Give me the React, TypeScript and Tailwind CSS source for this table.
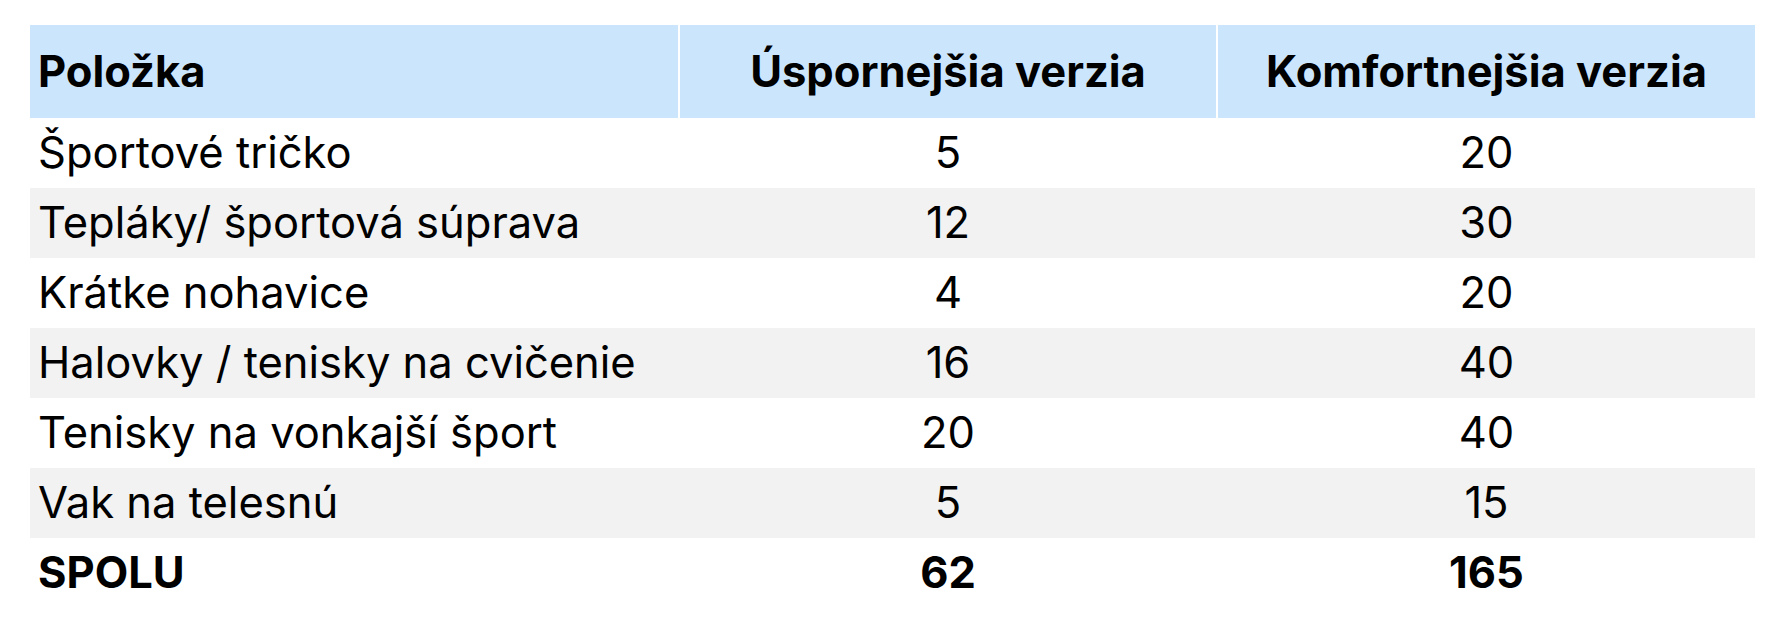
import React from "react"

const rows = [
  { item: "Športové tričko", eco: "5", comfort: "20" },
  { item: "Tepláky/ športová súprava", eco: "12", comfort: "30" },
  { item: "Krátke nohavice", eco: "4", comfort: "20" },
  { item: "Halovky / tenisky na cvičenie", eco: "16", comfort: "40" },
  { item: "Tenisky na vonkajší šport", eco: "20", comfort: "40" },
  { item: "Vak na telesnú", eco: "5", comfort: "15" },
]

export default function App() {
  return (
    <div
      className="w-[1780px] h-[632px] bg-white pt-[25px] pl-[30px] text-black"
      style={{ fontFamily: "Inter, 'Liberation Sans', sans-serif" }}
    >
      <div className="w-[1725px]">
        <div className="grid grid-cols-[648px_536px_537px] gap-x-[2px] h-[93px] text-[43.5px] font-bold">
          <div className="bg-[#cbe5fd] flex items-center pl-[8px]">Položka</div>
          <div className="bg-[#cbe5fd] flex items-center justify-center">Úspornejšia verzia</div>
          <div className="bg-[#cbe5fd] flex items-center justify-center">Komfortnejšia verzia</div>
        </div>

        {rows.map((r, i) => (
          <div
            key={r.item}
            className={
              "grid grid-cols-[648px_536px_537px] gap-x-[2px] h-[70px] text-[43.5px] " +
              (i % 2 === 1 ? "bg-[#f2f2f2]" : "bg-white")
            }
          >
            <div className="flex items-center pl-[8px]">{r.item}</div>
            <div className="flex items-center justify-center">{r.eco}</div>
            <div className="flex items-center justify-center">{r.comfort}</div>
          </div>
        ))}

        <div className="grid grid-cols-[648px_536px_537px] gap-x-[2px] h-[70px] text-[43.5px] font-bold">
          <div className="flex items-center pl-[8px]">SPOLU</div>
          <div className="flex items-center justify-center">62</div>
          <div className="flex items-center justify-center">165</div>
        </div>
      </div>
    </div>
  )
}
